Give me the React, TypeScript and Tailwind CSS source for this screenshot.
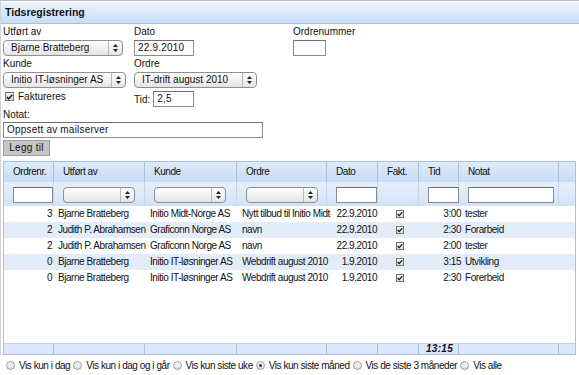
import React from "react";

const FONT = "font-['Liberation_Sans',Arial,sans-serif]";

const ROWS = [
  { nr: "3", av: "Bjarne Bratteberg", kunde: "Initio Midt-Norge AS", ordre: "Nytt tilbud til Initio Midt-Norge", dato: "22.9.2010", tid: "3:00", notat: "tester" },
  { nr: "2", av: "Judith P. Abrahamsen", kunde: "Graficonn Norge AS", ordre: "navn", dato: "22.9.2010", tid: "2:30", notat: "Forarbeid" },
  { nr: "2", av: "Judith P. Abrahamsen", kunde: "Graficonn Norge AS", ordre: "navn", dato: "22.9.2010", tid: "2:00", notat: "tester" },
  { nr: "0", av: "Bjarne Bratteberg", kunde: "Initio IT-løsninger AS", ordre: "Webdrift august 2010", dato: "1.9.2010", tid: "3:15", notat: "Utvikling" },
  { nr: "0", av: "Bjarne Bratteberg", kunde: "Initio IT-løsninger AS", ordre: "Webdrift august 2010", dato: "1.9.2010", tid: "2:30", notat: "Forerbeid" },
];

const COLS = "grid grid-cols-[50px_91px_92px_90px_51px_41px_40px_100px_16px]";

function Arrows() {
  return (
    <svg width="5" height="8" viewBox="0 0 5 8">
      <path d="M2.5 0 L5 3 L0 3 Z M0 5 L5 5 L2.5 8 Z" fill="#222" />
    </svg>
  );
}

function Select({ value, w }: { value?: string; w: string }) {
  return (
    <div
      className={`${w} h-[16px] flex rounded-[4px] border border-[#8f8f8f] bg-linear-to-b from-white to-[#e4e4e4] shadow-[inset_0_1px_0_#fff]`}
    >
      <span className="flex-1 pl-[7px] text-[10px] leading-[14px] whitespace-nowrap overflow-hidden text-[#111]">
        {value}
      </span>
      <span className="w-[14px] border-l border-[#b8b8b8] flex items-center justify-center">
        <Arrows />
      </span>
    </div>
  );
}

function Input({ value, w }: { value?: string; w: string }) {
  return (
    <div
      className={`${w} h-[16px] border border-[#8a8a8a] border-t-[#6f6f6f] bg-white pl-[3px] text-[10px] leading-[14px] tracking-[0.2px] text-[#111]`}
    >
      {value}
    </div>
  );
}

function Check({ size }: { size: string }) {
  return (
    <span className={`${size} border border-[#777] bg-linear-to-b from-[#f4f4f4] to-[#dcdcdc] flex items-center justify-center`}>
      <svg width="7" height="6" viewBox="0 0 7 6">
        <path d="M0.8 3 L2.6 4.9 L6.2 0.8" stroke="#111" strokeWidth="1.4" fill="none" />
      </svg>
    </span>
  );
}

function Radio({ checked }: { checked?: boolean }) {
  return (
    <span className="w-[9px] h-[9px] rounded-full border border-[#9a9a9a] bg-linear-to-b from-[#fafafa] to-[#dedede] flex items-center justify-center">
      {checked && <span className="w-[3px] h-[3px] rounded-full bg-[#333]" />}
    </span>
  );
}

const HEAD = ["Ordrenr.", "Utført av", "Kunde", "Ordre", "Dato", "Fakt.", "Tid", "Notat", ""];

const RADIOS = [
  "Vis kun i dag",
  "Vis kun i dag og i går",
  "Vis kun siste uke",
  "Vis kun siste måned",
  "Vis de siste 3 måneder",
  "Vis alle",
];

export default function App() {
  return (
    <div className={`w-[579px] h-[375px] bg-white overflow-hidden text-[#111] ${FONT}`}>
      <div className="border-t border-[#bdbdbd] border-l border-l-[#d4d4d4]">
        {/* tittel */}
        <div className="h-[22px] mt-[1px] border-b border-[#a9c0d8] bg-linear-to-b from-[#ecf4fe] to-[#c7ddf8] pl-[4px] flex items-center">
          <span className="text-[10.5px] font-bold pt-[1px]">Tidsregistrering</span>
        </div>

        <div className="pl-[2px] pt-[2px] text-[10px]">
          <div className="flex">
            <div className="w-[131px]">
              <div className="h-[12px] leading-[12px] mb-[2px]">Utført av</div>
              <Select value="Bjarne Bratteberg" w="w-[120px]" />
            </div>
            <div className="w-[159px]">
              <div className="h-[12px] leading-[12px] mb-[2px]">Dato</div>
              <Input value="22.9.2010" w="w-[60px]" />
            </div>
            <div>
              <div className="h-[12px] leading-[12px] mb-[2px]">Ordrenummer</div>
              <Input w="w-[33px]" />
            </div>
          </div>

          <div className="flex mt-[2px]">
            <div className="w-[131px]">
              <div className="h-[12px] leading-[12px] mb-[2px]">Kunde</div>
              <Select value="Initio IT-løsninger AS" w="w-[123px]" />
            </div>
            <div>
              <div className="h-[12px] leading-[12px] mb-[2px]">Ordre</div>
              <Select value="IT-drift august 2010" w="w-[123px]" />
            </div>
          </div>

          <div className="flex mt-[3px] h-[16px]">
            <div className="w-[131px] flex items-start pt-[1px] pl-[2px]">
              <Check size="w-[9px] h-[9px]" />
              <span className="ml-[4px] leading-[10px]">Faktureres</span>
            </div>
            <div className="flex items-center">
              <span className="mr-[3px]">Tid:</span>
              <Input value="2,5" w="w-[41px]" />
            </div>
          </div>

          <div className="h-[12px] leading-[12px] mt-[2px] mb-[1px]">Notat:</div>
          <Input value="Oppsett av mailserver" w="w-[260px]" />
          <div className="mt-[2px] w-[47px] h-[16px] bg-[#c6c6c6] border border-[#9d9d9d] text-[10px] tracking-[0.3px] leading-[14px] text-center">
            Legg til
          </div>
        </div>

        {/* tabell */}
        <div className="ml-[2px] mt-[5px] w-[573px] border border-[#a9c0d8] text-[10px] tracking-[-0.45px]">
          <div className={`${COLS} h-[20px] bg-linear-to-b from-[#dfebfa] to-[#c6dbf5]`}>
            {HEAD.map((h, i) => (
              <div key={i} className={`pl-[9px] leading-[20px] ${i < 8 ? "border-r border-[#a9c0d8]" : ""}`}>
                {h}
              </div>
            ))}
          </div>
          <div className={`${COLS} h-[24px] bg-linear-to-b from-[#e6f0fc] to-[#d2e3f8]`}>
            <div className="pl-[9px] pt-[5px] border-r border-[#c6d8ee]">
              <Input w="w-[40px]" />
            </div>
            {[0, 1, 2].map((i) => (
              <div key={i} className="pl-[9px] pt-[5px] border-r border-[#c6d8ee]">
                <Select w="w-[72px]" />
              </div>
            ))}
            <div className="pl-[9px] pt-[5px] border-r border-[#c6d8ee]">
              <Input w="w-[41px]" />
            </div>
            <div className="border-r border-[#c6d8ee]" />
            <div className="pl-[9px] pt-[5px] border-r border-[#c6d8ee]">
              <Input w="w-[31px]" />
            </div>
            <div className="pl-[9px] pt-[5px] border-r border-[#c6d8ee]">
              <Input w="w-[86px]" />
            </div>
            <div />
          </div>

          <div className="h-[137px]">
            {ROWS.map((r, i) => (
              <div
                key={i}
                className={`${COLS} h-[16px] leading-[16px] whitespace-nowrap ${i % 2 === 1 ? "bg-[#e3edfa]" : "bg-white"}`}
              >
                <div className="text-right pr-[2px]">{r.nr}</div>
                <div className="pl-[4px]">{r.av}</div>
                <div className="pl-[5px]">{r.kunde}</div>
                <div className="pl-[5px]">
                  <div className="w-[89px] overflow-hidden">{r.ordre}</div>
                </div>
                <div className="text-right pr-[1px]">{r.dato}</div>
                <div className="flex items-center pl-[18px]">
                  <Check size="w-[8px] h-[8px]" />
                </div>
                <div className="text-right -mr-[2px]">{r.tid}</div>
                <div className="pl-[6px] overflow-hidden">{r.notat}</div>
                <div />
              </div>
            ))}
          </div>

          <div className={`${COLS} h-[11px] bg-[#dbe8fb] border-t border-[#c3d5ec]`}>
            {HEAD.map((_, i) => (
              <div
                key={i}
                className={`leading-[10px] ${i < 8 ? "border-r border-[#a9c0d8]" : ""} ${i === 6 ? "text-right pr-[5px] italic font-bold tracking-[0.3px]" : ""}`}
              >
                {i === 6 ? "13:15" : ""}
              </div>
            ))}
          </div>
        </div>
      </div>

      <div className="flex items-center mt-[3px] pl-[6px] text-[10px] tracking-[-0.45px]">
        {RADIOS.map((t, i) => (
          <div key={i} className="flex items-center mr-[3px]">
            <Radio checked={i === 3} />
            <span className="ml-[4px]">{t}</span>
          </div>
        ))}
      </div>
    </div>
  );
}
